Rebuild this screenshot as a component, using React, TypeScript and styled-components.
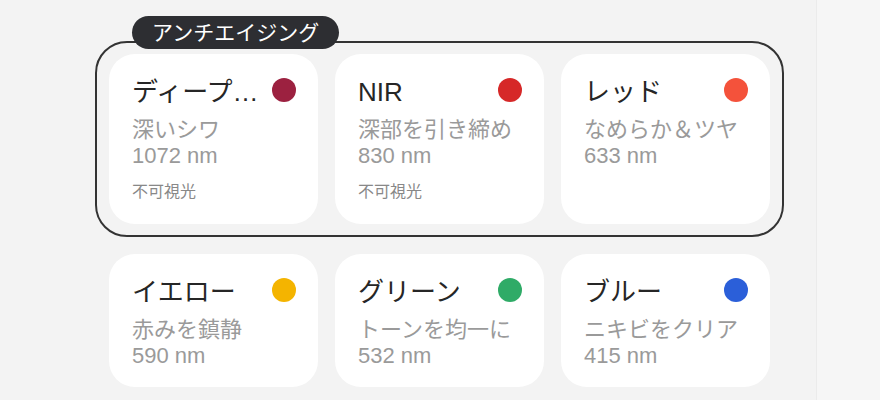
import React from 'react';
import styled, { createGlobalStyle } from 'styled-components';

const GlobalStyle = createGlobalStyle`
  html, body {
    margin: 0;
    padding: 0;
    width: 880px;
    height: 400px;
    overflow: hidden;
    background: #f6f6f6;
    font-family: "Liberation Sans", "Noto Sans CJK JP", sans-serif;
  }
`;

type Light = {
    name: string;
    effect: string;
    nm: number;
    color: string;
    invisible?: boolean;
};

const antiAging: Light[] = [
    { name: 'ディープ…', effect: '深いシワ', nm: 1072, color: '#9c2140', invisible: true },
    { name: 'NIR', effect: '深部を引き締め', nm: 830, color: '#d62828', invisible: true },
    { name: 'レッド', effect: 'なめらか＆ツヤ', nm: 633, color: '#f4523b' },
];

const others: Light[] = [
    { name: 'イエロー', effect: '赤みを鎮静', nm: 590, color: '#f4b400' },
    { name: 'グリーン', effect: 'トーンを均一に', nm: 532, color: '#2fab67' },
    { name: 'ブルー', effect: 'ニキビをクリア', nm: 415, color: '#2b5fd9' },
];

function LightCard({ light }: { light: Light }) {
    return (
        <Card>
            <CardHead>
                <Title>{light.name}</Title>
                <Dot $color={light.color} />
            </CardHead>
            <Effect>{light.effect}</Effect>
            <Wave>{light.nm} nm</Wave>
            {light.invisible && <Note>不可視光</Note>}
        </Card>
    );
}

export default function App() {
    return (
        <>
            <GlobalStyle />
            <Page>
                <Main>
                    <Group>
                        <GroupLabel>アンチエイジング</GroupLabel>
                        <Grid>
                            {antiAging.map((l) => <LightCard key={l.name} light={l} />)}
                        </Grid>
                    </Group>
                    <Row>
                        {others.map((l) => <LightCard key={l.name} light={l} />)}
                    </Row>
                </Main>
                <Side />
            </Page>
        </>
    );
}

const Page = styled.div`
    display: flex;
    width: 880px;
    height: 400px;
`;

const Main = styled.div`
    width: 817px;
    height: 100%;
    box-sizing: border-box;
    padding: 41px 0 0 95px;
    background: #f3f3f3;
    border-right: 1px solid #ebebeb;
    display: flex;
    flex-direction: column;
    gap: 17px;
`;

const Side = styled.div`
    flex: 1;
    background: #f6f6f6;
`;

const Group = styled.div`
    position: relative;
    width: 689px;
    box-sizing: border-box;
    border: 2px solid #333333;
    border-radius: 32px;
    padding: 11px 12px;
`;

const GroupLabel = styled.div`
    position: absolute;
    left: 35px;
    top: -27px;
    height: 33px;
    padding: 0 20px;
    border-radius: 17px;
    background: #2d2e32;
    color: #ffffff;
    font-size: 21px;
    line-height: 33px;
    white-space: nowrap;
`;

const Grid = styled.div`
    display: grid;
    grid-template-columns: repeat(3, 209px);
    gap: 17px;
`;

const Row = styled(Grid)`
    padding: 0 14px;
`;

const Card = styled.div`
    background: #ffffff;
    border-radius: 26px;
    padding: 21px 22px 18px 23px;
    display: flex;
    flex-direction: column;
    min-width: 0;
`;

const CardHead = styled.div`
    display: flex;
    align-items: center;
    gap: 8px;
    height: 34px;
`;

const Title = styled.div`
    flex: 1;
    min-width: 0;
    font-size: 26px;
    line-height: 34px;
    color: #262626;
    white-space: nowrap;
    overflow: hidden;
    text-overflow: ellipsis;
`;

const Dot = styled.span<{ $color: string }>`
    flex: none;
    width: 24px;
    height: 24px;
    border-radius: 50%;
    background: ${(p) => p.$color};
    margin-top: -5px;
`;

const Effect = styled.div`
    margin-top: 8px;
    font-size: 22px;
    line-height: 26px;
    color: #9a9a9a;
    white-space: nowrap;
`;

const Wave = styled.div`
    font-size: 22px;
    line-height: 26px;
    color: #9a9a9a;
`;

const Note = styled.div`
    margin: 13px 0 4px;
    font-size: 16px;
    line-height: 20px;
    color: #888888;
`;
